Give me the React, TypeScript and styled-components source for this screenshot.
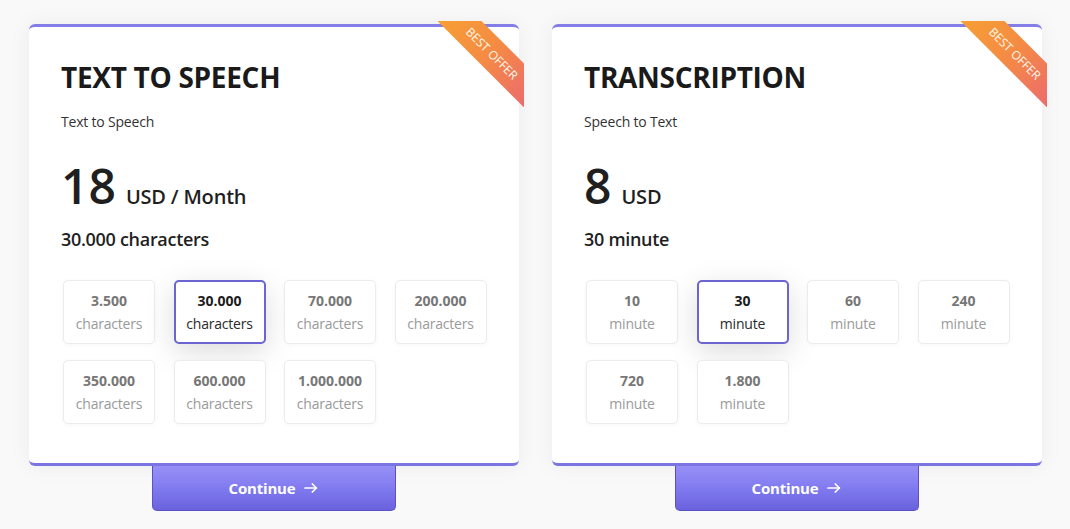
import React, { useState } from "react";
import styled, { createGlobalStyle } from "styled-components";

const Global = createGlobalStyle`
  html, body { margin: 0; padding: 0; background: #f9f9f9; }
  body { font-family: "Open Sans", "Noto Sans", sans-serif; color: #1d1d1f; }
  * { box-sizing: border-box; }
`;

const Page = styled.div`
  display: flex;
  justify-content: center;
  align-items: flex-start;
  gap: 33px;
  padding: 24px 0 0 1px;
  min-height: 529px;
`;

const Column = styled.div`
  display: flex;
  flex-direction: column;
  align-items: center;
  width: 490px;
`;

const Card = styled.div`
  position: relative;
  width: 100%;
  height: 442px;
  background: #fff;
  border-top: 3px solid #847de8;
  border-bottom: 3px solid #7a73e2;
  border-radius: 6px;
  box-shadow: 0 0 22px rgba(0, 0, 0, 0.06);
  padding: 32px 33px 0 32px;
`;

const Title = styled.h2`
  margin: 0;
  font-size: 28px;
  line-height: 36px;
  font-weight: 700;
  color: #1a1a1a;
  letter-spacing: -0.3px;
`;

const Subtitle = styled.p`
  margin: 17px 0 0;
  font-size: 14px;
  line-height: 20px;
  color: #333;
  letter-spacing: -0.2px;
`;

const PriceRow = styled.div`
  display: flex;
  align-items: baseline;
  gap: 10px;
  margin-top: 26px;
`;

const Amount = styled.span`
  font-size: 48px;
  line-height: 56px;
  font-weight: 600;
  color: #1f1f1f;
`;

const Unit = styled.span`
  font-size: 20px;
  font-weight: 600;
  color: #1f1f1f;
  letter-spacing: -0.2px;
`;

const Quantity = styled.div`
  margin-top: 13px;
  font-size: 18px;
  line-height: 24px;
  font-weight: 600;
  color: #1f1f1f;
  letter-spacing: -0.3px;
`;

const Options = styled.div`
  display: grid;
  grid-template-columns: repeat(4, 92px);
  column-gap: 18.5px;
  row-gap: 16px;
  margin-top: 29px;
  margin-left: 2px;
`;

const Option = styled.button<{ $active?: boolean }>`
  display: flex;
  flex-direction: column;
  align-items: center;
  justify-content: center;
  height: 64px;
  padding: 0;
  background: #fff;
  font-family: inherit;
  cursor: pointer;
  border: ${(p) => (p.$active ? "2px solid #6b64d2" : "1px solid #ececec")};
  border-radius: 5px;
  box-shadow: ${(p) =>
    p.$active ? "0 8px 30px rgba(0,0,0,0.14)" : "0 1px 4px rgba(0,0,0,0.04)"};
`;

const OptValue = styled.span<{ $active?: boolean }>`
  font-size: 14px;
  line-height: 23px;
  font-weight: 700;
  color: ${(p) => (p.$active ? "#1c1c1c" : "#777")};
`;

const OptUnit = styled.span<{ $active?: boolean }>`
  font-size: 14px;
  line-height: 23px;
  font-weight: 400;
  color: ${(p) => (p.$active ? "#2a2a2a" : "#9a9a9a")};
  letter-spacing: -0.2px;
`;

const RibbonClip = styled.div`
  position: absolute;
  top: -6px;
  right: -5px;
  width: 86px;
  height: 86px;
  overflow: hidden;
  pointer-events: none;
`;

const RibbonBand = styled.div`
  position: absolute;
  left: -11px;
  top: 16.5px;
  width: 130px;
  height: 31px;
  transform: rotate(45deg);
  background: linear-gradient(to right, #f7a032 0%, #f48a45 50%, #ec6870 100%);
  color: #fff8ec;
  font-size: 12px;
  line-height: 31px;
  text-align: center;
  letter-spacing: 0.1px;
  text-transform: uppercase;
`;

const Continue = styled.button`
  display: flex;
  align-items: center;
  justify-content: center;
  gap: 8px;
  width: 244px;
  height: 45px;
  padding: 0;
  border: 1px solid #5a52c6;
  border-top: none;
  border-radius: 0 0 5px 5px;
  background: linear-gradient(to bottom, #9b94fc 0%, #807aef 50%, #6a62dd 100%);
  color: #fff;
  font-family: inherit;
  font-size: 15px;
  font-weight: 700;
  letter-spacing: -0.2px;
  cursor: pointer;
`;

const Arrow = styled.svg`
  width: 16px;
  height: 16px;
`;

type Plan = {
  title: string;
  subtitle: string;
  amount: string;
  unit: string;
  unitLabel: string;
  options: string[];
  selected: number;
};

const plans: Plan[] = [
  {
    title: "TEXT TO SPEECH",
    subtitle: "Text to Speech",
    amount: "18",
    unit: "USD / Month",
    unitLabel: "characters",
    options: ["3.500", "30.000", "70.000", "200.000", "350.000", "600.000", "1.000.000"],
    selected: 1,
  },
  {
    title: "TRANSCRIPTION",
    subtitle: "Speech to Text",
    amount: "8",
    unit: "USD",
    unitLabel: "minute",
    options: ["10", "30", "60", "240", "720", "1.800"],
    selected: 1,
  },
];

function PlanCard({ plan }: { plan: Plan }) {
  const [sel, setSel] = useState(plan.selected);
  return (
    <Column>
      <Card>
        <RibbonClip>
          <RibbonBand>Best Offer</RibbonBand>
        </RibbonClip>
        <Title>{plan.title}</Title>
        <Subtitle>{plan.subtitle}</Subtitle>
        <PriceRow>
          <Amount>{plan.amount}</Amount>
          <Unit>{plan.unit}</Unit>
        </PriceRow>
        <Quantity>
          {plan.options[sel]} {plan.unitLabel}
        </Quantity>
        <Options>
          {plan.options.map((o, i) => (
            <Option key={o} $active={i === sel} onClick={() => setSel(i)}>
              <OptValue $active={i === sel}>{o}</OptValue>
              <OptUnit $active={i === sel}>{plan.unitLabel}</OptUnit>
            </Option>
          ))}
        </Options>
      </Card>
      <Continue>
        Continue
        <Arrow viewBox="0 0 24 24" fill="none" stroke="currentColor" strokeWidth={2.6} strokeLinecap="round" strokeLinejoin="round">
          <path d="M3 12h17" />
          <path d="M14 6l6 6-6 6" />
        </Arrow>
      </Continue>
    </Column>
  );
}

export default function App() {
  return (
    <>
      <Global />
      <Page>
        {plans.map((p) => (
          <PlanCard key={p.title} plan={p} />
        ))}
      </Page>
    </>
  );
}
